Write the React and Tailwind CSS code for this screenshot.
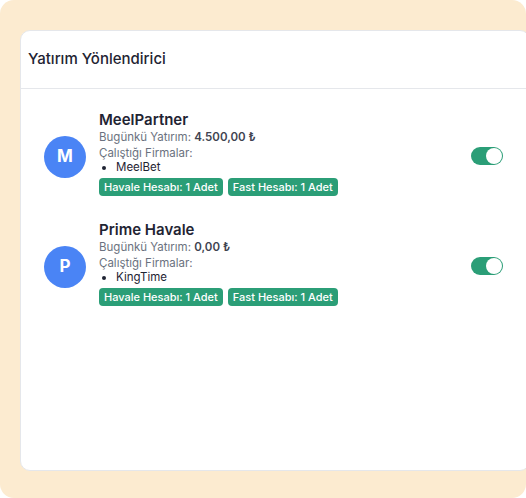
import React from 'react';

const routers = [
  { initial: 'M', name: 'MeelPartner', amount: '4.500,00 ₺', firms: ['MeelBet'] },
  { initial: 'P', name: 'Prime Havale', amount: '0,00 ₺', firms: ['KingTime'] },
];

const Toggle = () => (
  <div className="w-[32px] h-[18px] rounded-full bg-[#2b9e77] flex items-center justify-end p-[1px] mt-[6px]">
    <div className="w-[16px] h-[16px] rounded-full bg-white" />
  </div>
);

const RouterRow = ({ item }) => (
  <div className="flex items-center pl-[23px] pr-[26px]">
    <div className="w-[42px] h-[42px] rounded-full bg-[#4a84f5] flex items-center justify-center text-white text-[17px] font-bold mt-[8px] shrink-0">
      {item.initial}
    </div>
    <div className="ml-[13px] flex-1">
      <div className="text-[15px] font-semibold text-[#1f2433] leading-[20px]">{item.name}</div>
      <div className="text-[11.5px] text-[#6b7280] leading-[15px]">
        Bugünkü Yatırım: <span className="font-semibold text-[#3f4451]">{item.amount}</span>
      </div>
      <div className="text-[11.5px] text-[#6b7280] leading-[16px]">Çalıştığı Firmalar:</div>
      <ul className="list-disc pl-[17px] text-[11.5px] text-[#1f2433] leading-[12px]">
        {item.firms.map((f) => (
          <li key={f}>{f}</li>
        ))}
      </ul>
      <div className="flex gap-[5px] mt-[5px]">
        <span className="bg-[#2b9e77] text-white text-[11px] font-medium rounded-[4px] px-[5px] h-[18px] flex items-center">
          Havale Hesabı: 1 Adet
        </span>
        <span className="bg-[#2b9e77] text-white text-[11px] font-medium rounded-[4px] px-[5px] h-[18px] flex items-center">
          Fast Hesabı: 1 Adet
        </span>
      </div>
    </div>
    <Toggle />
  </div>
);

const App = () => {
  return (
    <div className="w-[526px] h-[498px] bg-white" style={{ fontFamily: 'Inter, "Noto Sans", sans-serif' }}>
      <div className="w-full h-full bg-[#fcebd0] rounded-[14px] overflow-hidden pt-[30px] pl-[20px] pb-[27px]">
        <div className="w-[510px] h-full bg-white rounded-[10px] border border-[#e5e7eb]">
          <div className="h-[58px] flex items-center px-[7px] border-b border-[#e5e7eb]">
            <h2 className="text-[15px] font-medium text-[#1f2433]">Yatırım Yönlendirici</h2>
          </div>
          <div className="pt-[21px] flex flex-col gap-[24px]">
            {routers.map((r) => (
              <RouterRow key={r.name} item={r} />
            ))}
          </div>
        </div>
      </div>
    </div>
  );
};

export default App;
